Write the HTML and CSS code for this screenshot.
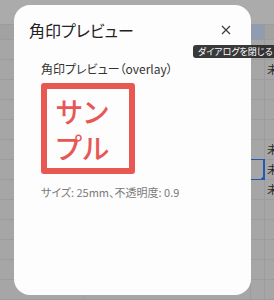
FILE: index.html
```html
<!DOCTYPE html>
<html lang="ja">
<head>
    <meta charset="UTF-8">
    <meta name="viewport" content="width=device-width, initial-scale=1.0">
    <title>角印プレビュー</title>
    <link rel="stylesheet" href="styles.css">
</head>
<body>
    <div class="sheet">
        <div class="row top-bar">
            <div class="cell c1"></div><div class="cell c2"></div><div class="cell c3"></div><div class="cell c4"></div>
        </div>
        <div class="row head">
            <div class="cell c1"></div><div class="cell c2"></div><div class="cell c3 picked"></div><div class="cell c4"></div>
        </div>
        <div class="row"><div class="cell c1"></div><div class="cell c2"></div><div class="cell c3"></div><div class="cell c4"></div></div>
        <div class="row"><div class="cell c1"></div><div class="cell c2"></div><div class="cell c3"></div><div class="cell c4">未</div></div>
        <div class="row"><div class="cell c1"></div><div class="cell c2"></div><div class="cell c3"></div><div class="cell c4"></div></div>
        <div class="row"><div class="cell c1"></div><div class="cell c2"></div><div class="cell c3"></div><div class="cell c4"></div></div>
        <div class="row"><div class="cell c1"></div><div class="cell c2"></div><div class="cell c3"></div><div class="cell c4"></div></div>
        <div class="row"><div class="cell c1"></div><div class="cell c2"></div><div class="cell c3"></div><div class="cell c4">未</div></div>
        <div class="row"><div class="cell c1"></div><div class="cell c2"></div><div class="cell c3 selected"><span class="handle"></span></div><div class="cell c4">未</div></div>
        <div class="row"><div class="cell c1"></div><div class="cell c2"></div><div class="cell c3"></div><div class="cell c4">未</div></div>
        <div class="row"><div class="cell c1"></div><div class="cell c2"></div><div class="cell c3"></div><div class="cell c4"></div></div>
        <div class="row"><div class="cell c1"></div><div class="cell c2"></div><div class="cell c3"></div><div class="cell c4"></div></div>
        <div class="row"><div class="cell c1"></div><div class="cell c2"></div><div class="cell c3"></div><div class="cell c4"></div></div>
        <div class="row"><div class="cell c1"></div><div class="cell c2"></div><div class="cell c3"></div><div class="cell c4"></div></div>
        <div class="row"><div class="cell c1"></div><div class="cell c2"></div><div class="cell c3"></div><div class="cell c4"></div></div>
    </div>

    <div class="dialog">
        <div class="dialog-header">
            <h2 class="dialog-title">角印プレビュー</h2>
            <button class="close-btn" aria-label="ダイアログを閉じる">
                <svg width="10" height="10" viewBox="0 0 10 10">
                    <path d="M1 1 L9 9 M9 1 L1 9" stroke="#404040" stroke-width="1.3" fill="none"/>
                </svg>
            </button>
        </div>
        <div class="dialog-body">
            <div class="preview-label">角印プレビュー（overlay）</div>
            <div class="stamp">
                <div class="stamp-line">サン</div>
                <div class="stamp-line">プル</div>
            </div>
            <div class="preview-info">サイズ: 25mm、不透明度: 0.9</div>
        </div>
    </div>

    <div class="tooltip">ダイアログを閉じる</div>
</body>
</html>
```

FILE: styles.css
```css
html, body {
    margin: 0;
    padding: 0;
}
body {
    width: 274px;
    height: 300px;
    overflow: hidden;
    position: relative;
    font-family: 'Noto Sans CJK JP', 'Noto Sans', sans-serif;
    font-feature-settings: "palt";
    background-color: #a6a6a6;
}

/* spreadsheet behind the overlay (already dimmed) */
.sheet {
    display: flex;
    flex-direction: column;
}
.row {
    display: flex;
    height: 20px;
    flex-shrink: 0;
}
.row.top-bar {
    height: 25px;
    background-color: #ababab;
}
.row.head {
    height: 15px;
    background-color: #a2a2a2;
}
.cell {
    box-sizing: border-box;
    height: 100%;
    border-right: 1px solid #9c9c9c;
    border-bottom: 1px solid #9c9c9c;
    font-size: 11px;
    line-height: 19px;
    color: #2a2a2a;
    overflow: hidden;
    white-space: nowrap;
}
.top-bar .cell {
    border-right: none;
}
.c1 { width: 85px; }
.c2 { width: 166px; }
.c3 { width: 14px; position: relative; }
.c4 { width: 9px; padding-left: 2px; border-right: none; }
.cell.picked {
    background-color: #8f9cb2;
}
.cell.selected {
    border-top: 1px solid #2456b3;
    border-right: 2px solid #2456b3;
    border-bottom: 1px solid #2456b3;
    margin-top: -1px;
    height: 21px;
}
.handle {
    position: absolute;
    right: -4px;
    bottom: -4px;
    width: 6px;
    height: 6px;
    border-radius: 50%;
    background-color: #1d4fae;
}

/* dialog */
.dialog {
    position: absolute;
    left: 14px;
    top: 5px;
    width: 237px;
    height: 290px;
    box-sizing: border-box;
    background-color: #fdfdfd;
    border-radius: 16px;
    padding: 14px 14px 0 15px;
}
.dialog-header {
    display: flex;
    justify-content: space-between;
    align-items: center;
    height: 22px;
}
.dialog-title {
    margin: 0;
    font-size: 16px;
    font-weight: normal;
    color: #222;
    line-height: 22px;
}
.close-btn {
    border: none;
    background: none;
    padding: 0;
    width: 10px;
    height: 10px;
    margin-right: 6px;
    display: flex;
    cursor: pointer;
}
.dialog-body {
    padding: 0 12px;
}
.preview-label {
    margin-top: 20px;
    font-size: 12px;
    line-height: 16px;
    color: #333;
}
.stamp {
    margin-top: 6px;
    width: 94px;
    height: 91px;
    box-sizing: border-box;
    border: 6px solid rgba(229, 57, 53, 0.85);
    border-radius: 3px;
    display: flex;
    flex-direction: column;
    justify-content: center;
    padding-left: 9px;
}
.stamp-line {
    font-size: 28px;
    line-height: 36px;
    height: 36px;
    color: rgba(229, 57, 53, 0.85);
    font-weight: 500;
    letter-spacing: 1px;
}
.preview-info {
    margin-top: 10px;
    font-size: 11px;
    line-height: 16px;
    color: #7a7a7a;
}

/* tooltip over close button */
.tooltip {
    position: absolute;
    left: 193px;
    top: 45px;
    height: 13px;
    padding: 0 5px;
    background-color: rgba(40, 40, 40, 0.92);
    border-radius: 3px;
    color: #fff;
    font-size: 9px;
    line-height: 13px;
    white-space: nowrap;
}
```
